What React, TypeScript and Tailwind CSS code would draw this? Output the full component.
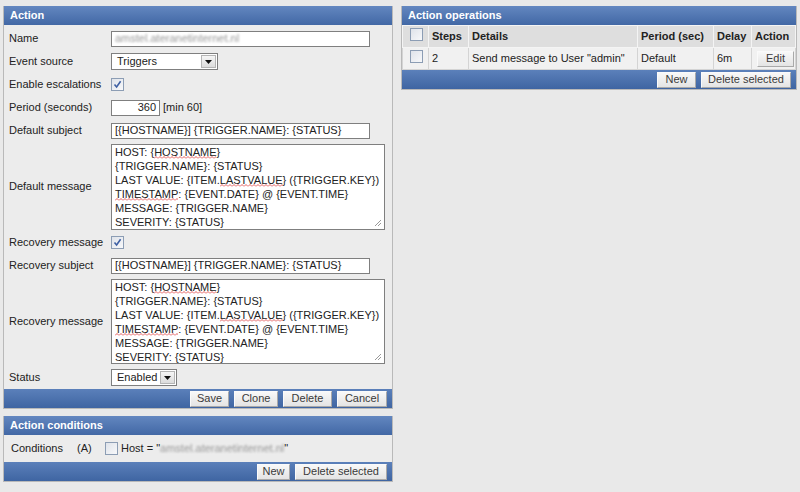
import React from "react";

const font = { fontFamily: '"Liberation Sans", Arial, sans-serif' };

function Check({ checked }: { checked?: boolean }) {
  return (
    <span className="inline-flex h-[13px] w-[13px] items-center justify-center border border-[#8c9db4] bg-gradient-to-br from-[#dfe3ea] to-[#f7f8fa]">
      {checked && (
        <svg width="9" height="9" viewBox="0 0 9 9">
          <path d="M1.5 4.5 L3.6 7 L7.6 1.2" fill="none" stroke="#3d5fa3" strokeWidth="1.6" />
        </svg>
      )}
    </span>
  );
}

function Select({ value, width }: { value: string; width: string }) {
  return (
    <div className={`flex h-[17px] items-center border border-[#7f7f7f] bg-white ${width}`}>
      <span className="flex-1 pl-[5px] text-[11px] text-[#222]">{value}</span>
      <span className="mr-[1px] flex h-[13px] w-[15px] items-center justify-center border border-[#b5b5b5] bg-gradient-to-b from-[#f6f6f6] to-[#dcdcdc]">
        <svg width="7" height="4" viewBox="0 0 7 4">
          <path d="M0 0 H7 L3.5 4 Z" fill="#111" />
        </svg>
      </span>
    </div>
  );
}

function Btn({ children, w }: { children: React.ReactNode; w: string }) {
  return (
    <span className={`flex h-[16px] items-center justify-center border border-[#fafafa] border-r-[#a9a9a9] border-b-[#a9a9a9] bg-gradient-to-b from-[#f8f8f8] to-[#e4e4e4] text-[11px] text-[#3a3a3a] ${w}`}>
      {children}
    </span>
  );
}

function Bar({ children }: { children?: React.ReactNode }) {
  return (
    <div className="flex h-[19px] items-center justify-end gap-[5px] bg-gradient-to-b from-[#5b80ba] to-[#3f65a2] px-[5px]">
      {children}
    </div>
  );
}

function Head({ title }: { title: string }) {
  return (
    <div className="flex h-[19px] items-center bg-gradient-to-b from-[#6387c0] to-[#4268a5] pl-[6px] text-[11px] font-bold text-white">
      {title}
    </div>
  );
}

function Row({ label, children, h = "h-[23px]" }: { label: string; children: React.ReactNode; h?: string }) {
  return (
    <div className={`flex items-center ${h}`}>
      <div className="w-[107px] pl-[5px] text-[11px] text-[#222]">{label}</div>
      <div className="flex items-center">{children}</div>
    </div>
  );
}

// spell-check squiggle drawn under a word
function Spell({ children, id }: { children: React.ReactNode; id: string }) {
  return (
    <span className="relative">
      {children}
      <svg className="absolute bottom-[-1px] left-0 h-[3px] w-full" preserveAspectRatio="none">
        <defs>
          <pattern id={id} width="4" height="3" patternUnits="userSpaceOnUse">
            <path d="M0 2.5 L2 0.5 L4 2.5" fill="none" stroke="#e04848" strokeWidth="0.9" />
          </pattern>
        </defs>
        <rect width="100%" height="3" fill={`url(#${id})`} />
      </svg>
    </span>
  );
}

function Message({ h, k }: { h: string; k: string }) {
  return (
    <div className={`relative w-[274px] overflow-hidden border border-[#7f7f7f] bg-white px-[3px] text-[11px] leading-[14px] text-[#222] ${h}`}>
      <div>
        HOST: {"{"}
        <Spell id={`${k}a`}>HOSTNAME</Spell>
        {"}"}
      </div>
      <div>{"{TRIGGER.NAME}: {STATUS}"}</div>
      <div>
        LAST VALUE: {"{ITEM."}
        <Spell id={`${k}b`}>LASTVALUE</Spell>
        {"} ({TRIGGER.KEY})"}
      </div>
      <div>
        <Spell id={`${k}c`}>TIMESTAMP</Spell>
        {": {EVENT.DATE} @ {EVENT.TIME}"}
      </div>
      <div>{"MESSAGE: {TRIGGER.NAME}"}</div>
      <div>{"SEVERITY: {STATUS}"}</div>
      <svg className="absolute bottom-[2px] right-[2px]" width="8" height="8" viewBox="0 0 8 8">
        <path d="M7 1 L1 7 M7 4 L4 7" stroke="#999" strokeWidth="1" />
      </svg>
    </div>
  );
}

function Input({ w, children, right }: { w: string; children?: React.ReactNode; right?: boolean }) {
  return (
    <div
      className={`flex h-[16px] items-center border border-[#7f7f7f] bg-white px-[3px] text-[11px] text-[#222] ${w} ${
        right ? "justify-end" : ""
      }`}
    >
      {children}
    </div>
  );
}

export default function App() {
  const subject = "[{HOSTNAME}] {TRIGGER.NAME}: {STATUS}";
  return (
    <div className="flex h-[492px] w-[800px] gap-[8px] bg-[#e9e9e9] pl-[3px] pt-[6px]" style={font}>
      {/* Left column */}
      <div className="flex w-[390px] flex-col gap-[7px]">
        <div className="border border-[#b9b9b9] border-t-0 bg-[#ececec]">
          <Head title="Action" />
          <div className="pt-[2px]">
            <Row label="Name">
              <Input w="w-[259px]">
                <span className="text-[#999] blur-[1.2px]">amstel.ateranetinternet.nl</span>
              </Input>
            </Row>
            <Row label="Event source">
              <Select value="Triggers" width="w-[107px]" />
            </Row>
            <Row label="Enable escalations">
              <Check checked />
            </Row>
            <Row label="Period (seconds)">
              <Input w="w-[49px]" right>
                360
              </Input>
              <span className="ml-[3px] text-[11px] text-[#222]">[min 60]</span>
            </Row>
            <Row label="Default subject">
              <Input w="w-[259px]">{subject}</Input>
            </Row>
            <Row label="Default message" h="h-[89px]">
              <Message h="h-[86px]" k="d" />
            </Row>
            <Row label="Recovery message">
              <Check checked />
            </Row>
            <Row label="Recovery subject">
              <Input w="w-[259px]">{subject}</Input>
            </Row>
            <Row label="Recovery message" h="h-[89px]">
              <Message h="h-[85px]" k="r" />
            </Row>
            <Row label="Status">
              <Select value="Enabled" width="w-[66px]" />
            </Row>
          </div>
          <Bar>
            <Btn w="w-[39px]">Save</Btn>
            <Btn w="w-[44px]">Clone</Btn>
            <Btn w="w-[49px]">Delete</Btn>
            <Btn w="w-[50px]">Cancel</Btn>
          </Bar>
        </div>

        <div className="border border-[#b9b9b9] border-t-0 bg-[#ececec]">
          <Head title="Action conditions" />
          <div className="flex h-[27px] items-center pl-[7px] text-[11px] text-[#222]">
            <span className="w-[66px]">Conditions</span>
            <span className="w-[28px]">(A)</span>
            <Check />
            <span className="ml-[3px]">Host = "</span>
            <span className="text-[#999] blur-[1.2px]">amstel.ateranetinternet.nl</span>
            <span>"</span>
          </div>
          <Bar>
            <Btn w="w-[33px]">New</Btn>
            <Btn w="w-[92px]">Delete selected</Btn>
          </Bar>
        </div>
      </div>

      {/* Right column */}
      <div className="w-[396px] self-start border border-[#b9b9b9] border-t-0 bg-[#ececec]">
        <Head title="Action operations" />
        <table className="w-full border-collapse text-[11px] text-[#222]">
          <thead>
            <tr className="h-[22px] bg-[#dedede] text-left font-bold">
              <th className="w-[26px] border border-[#f4f4f4] pl-[7px]">
                <Check />
              </th>
              <th className="w-[40px] border border-[#f4f4f4] pl-[3px]">Steps</th>
              <th className="w-[169px] border border-[#f4f4f4] pl-[3px]">Details</th>
              <th className="w-[76px] border border-[#f4f4f4] pl-[3px]">Period (sec)</th>
              <th className="w-[38px] border border-[#f4f4f4] pl-[3px]">Delay</th>
              <th className="border border-[#f4f4f4] pl-[3px]">Action</th>
            </tr>
          </thead>
          <tbody>
            <tr className="h-[22px] bg-[#f1f1f1]">
              <td className="border border-[#d4d4d4] pl-[7px]">
                <Check />
              </td>
              <td className="border border-[#d4d4d4] pl-[3px]">2</td>
              <td className="border border-[#d4d4d4] pl-[3px]">Send message to User "admin"</td>
              <td className="border border-[#d4d4d4] pl-[3px]">Default</td>
              <td className="border border-[#d4d4d4] pl-[3px]">6m</td>
              <td className="border border-[#d4d4d4] pl-[5px]">
                <Btn w="w-[37px]">Edit</Btn>
              </td>
            </tr>
          </tbody>
        </table>
        <Bar>
          <Btn w="w-[39px]">New</Btn>
          <Btn w="w-[90px]">Delete selected</Btn>
        </Bar>
      </div>
    </div>
  );
}
